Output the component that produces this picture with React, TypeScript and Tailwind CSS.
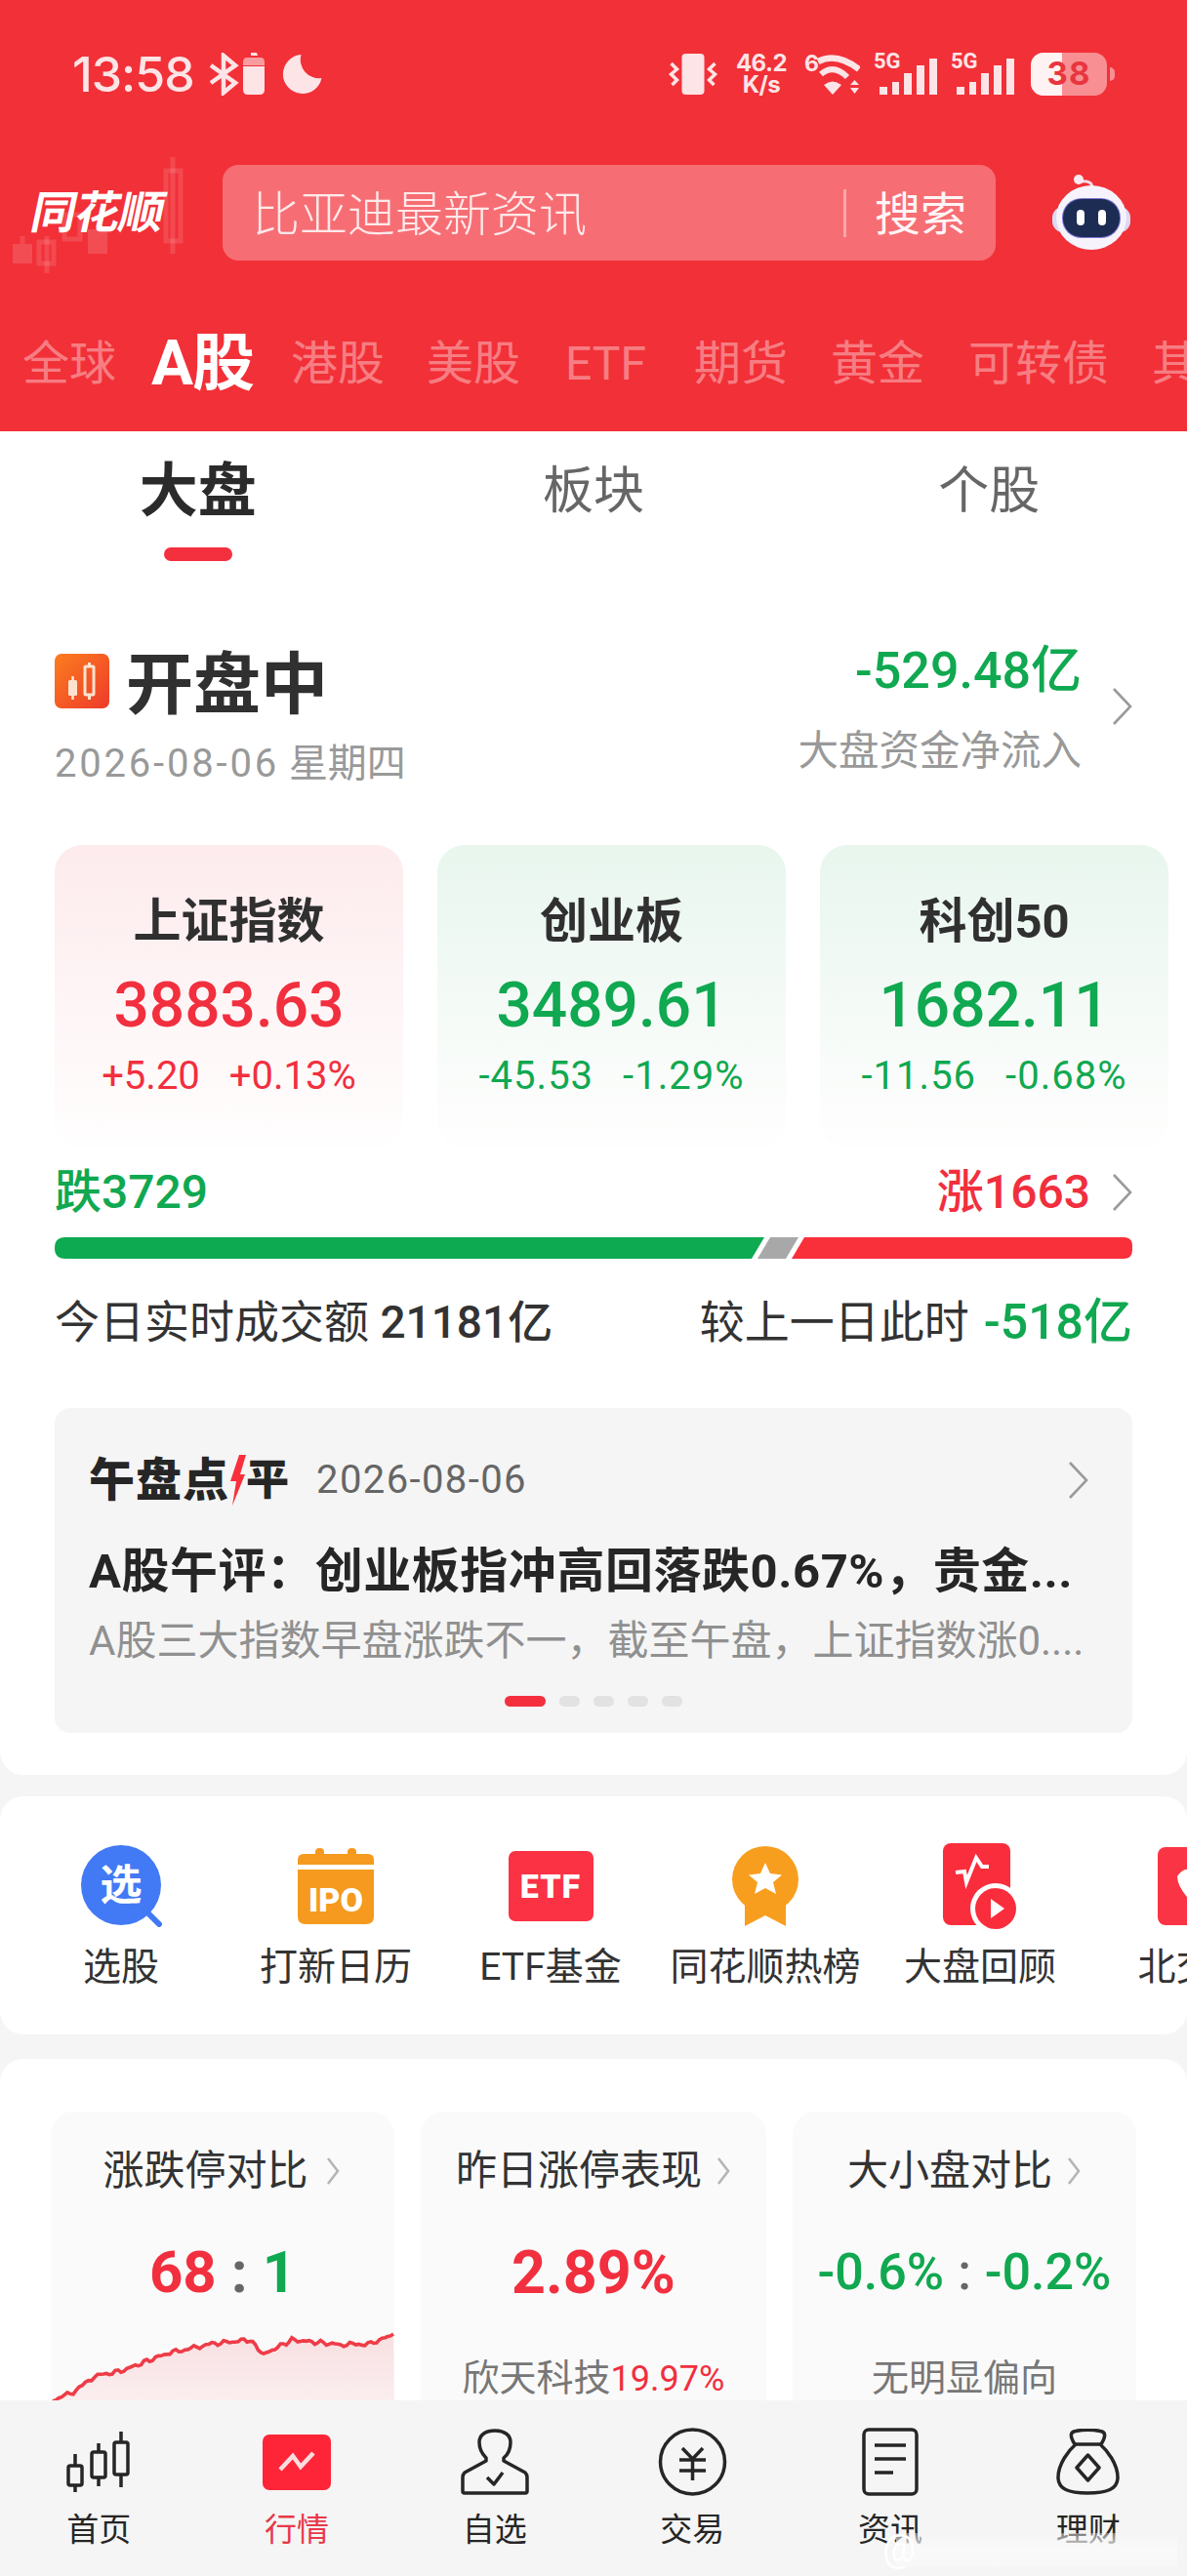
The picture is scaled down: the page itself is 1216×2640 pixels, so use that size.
import React from "react";

const RED = "text-[#f12f3e]";
const GREEN = "text-[#10a850]";

function Chevron({ className = "" }: { className?: string }) {
  return (
    <svg className={`shrink-0 ${className}`} width="22" height="40" viewBox="0 0 22 40" fill="none">
      <polyline points="3,2 20,20 3,38" stroke="#9a9a9a" strokeWidth="2.6" />
    </svg>
  );
}

function SmallChevron() {
  return (
    <svg className="shrink-0" width="16" height="30" viewBox="0 0 16 30" fill="none">
      <polyline points="3,2 13,15 3,28" stroke="#b5b5b5" strokeWidth="2.6" />
    </svg>
  );
}

function Signal() {
  return (
    <div className="relative w-[65px] h-[44px] shrink-0">
      <span className="absolute left-0 top-[-2px] text-[22px] leading-[22px] font-bold text-[#fde4e6]">5G</span>
      <svg className="absolute left-0 top-0" width="65" height="44" viewBox="0 0 65 44" fill="#fde4e6">
        <rect x="6" y="35" width="8" height="8" />
        <rect x="19" y="30" width="7" height="13" />
        <rect x="31" y="21" width="8" height="22" />
        <rect x="44" y="13" width="8" height="30" />
        <rect x="57" y="6" width="8" height="37" />
      </svg>
    </div>
  );
}

function StatusBar() {
  return (
    <div className="flex items-center justify-between h-[54px] pl-[74px] pr-[74px] text-[#fde4e6]">
      <div className="flex items-center">
        <span className="text-[50px] leading-[54px] font-medium w-[130px] font-['Inter',sans-serif] tracking-[-1px]">13:58</span>
        <svg className="ml-[8px]" width="34" height="44" viewBox="0 0 32 44" fill="none" stroke="#fde4e6" strokeWidth="4.5">
          <path d="M3 13 L28 31 L16 41 V3 L28 13 L3 31" />
        </svg>
        <svg className="ml-[3px]" width="22" height="44" viewBox="0 0 22 44" fill="#fde4e6">
          <path d="M8 0 H14 L15 3 H8 Z" />
          <path d="M4 5 H18 Q22 5 22 10 V13 H0 V10 Q0 5 4 5 Z" fillOpacity="0.6" />
          <path d="M0 14 H22 V38 Q22 43 17 43 H5 Q0 43 0 38 Z" />
        </svg>
        <svg className="ml-[17px]" width="43" height="42" viewBox="0 0 42 42" fill="#fde4e6">
          <path d="M20 1 A20 20 0 1 0 41 25 A19 19 0 0 1 20 1 Z" />
        </svg>
      </div>
      <div className="flex items-center">
        <svg width="53" height="44" viewBox="0 0 52 44" fill="none">
          <rect x="14" y="1" width="23" height="42" rx="4" fill="#fde4e6" />
          <path d="M3 11 L9 17 L3 22 L9 28 L4 33" stroke="#fde4e6" strokeWidth="3.5" />
          <path d="M48 11 L42 17 L48 22 L42 28 L47 33" stroke="#fde4e6" strokeWidth="3.5" />
        </svg>
        <div className="ml-[14px] w-[58px] flex flex-col items-center font-bold text-[24px] leading-[22px] font-['Inter',sans-serif] tracking-[-0.5px]">
          <span>46.2</span>
          <span>K/s</span>
        </div>
        <svg className="ml-[15px]" width="57" height="44" viewBox="0 0 57 44" fill="none">
          <text x="0" y="19" fontSize="23" fontWeight="700" fill="#fde4e6" fontFamily="Inter">6</text>
          <path d="M14 9 Q33 -1 56 17" stroke="#fde4e6" strokeWidth="6.5" />
          <path d="M17 22 Q30 11 44 25" stroke="#fde4e6" strokeWidth="6" />
          <path d="M20 33 Q29 26 38 33 L29 43 Z" fill="#fde4e6" />
          <path d="M47 33 L51.5 28 L56 33 Z M47 36 H56 L51.5 42 Z" fill="#fde4e6" />
        </svg>
        <div className="ml-[14px]"><Signal /></div>
        <div className="ml-[14px]"><Signal /></div>
        <div className="relative ml-[17px] w-[78px] h-[44px] rounded-[13px] bg-[#f88f93] overflow-hidden">
          <div className="w-[32px] h-full bg-[#fff2f3]" />
          <span className="absolute inset-0 flex items-center justify-center text-[33px] font-bold text-[#e8363e] font-['Inter',sans-serif] tracking-[1px]">38</span>
        </div>
        <div className="ml-[3px] w-[5px] h-[14px] rounded-r-full bg-[#f88f93]" />
      </div>
    </div>
  );
}

function Robot() {
  return (
    <svg width="84" height="78" viewBox="0 0 80 78">
      <path d="M41 16 Q42 5 29 7" fill="none" stroke="#f3dbe8" strokeWidth="3" />
      <circle cx="27" cy="5" r="5" fill="#fbe9f1" />
      <rect x="0" y="33" width="80" height="26" rx="11" fill="#ded9f2" />
      <ellipse cx="40" cy="44" rx="36" ry="33" fill="#f7f3fc" />
      <rect x="10" y="24" width="60" height="41" rx="20" fill="#7f76d6" />
      <rect x="11" y="25" width="58" height="39" rx="19" fill="#1d2c52" />
      <rect x="25" y="36" width="8" height="16" rx="4" fill="#fff" />
      <rect x="47" y="36" width="8" height="16" rx="4" fill="#fff" />
    </svg>
  );
}

function LogoCandles() {
  return (
    <svg className="absolute left-0 top-[-9px]" width="228" height="130" viewBox="0 0 228 130" fill="none">
      <g stroke="#ffffff" strokeOpacity="0.12" strokeWidth="5">
        <path d="M177 1 V100" />
        <rect x="170" y="15" width="15" height="72" />
        <path d="M48 82 V120" />
        <rect x="40" y="88" width="15" height="22" />
        <rect x="66" y="60" width="16" height="25" />
        <path d="M23 82 V90" />
      </g>
      <g fill="#ffffff" fillOpacity="0.14">
        <rect x="13" y="90" width="20" height="20" />
        <rect x="90" y="75" width="20" height="25" />
      </g>
    </svg>
  );
}

function Header() {
  return (
    <div className="shrink-0 h-[442px] bg-[#f23038] pt-[49px] overflow-hidden">
      <StatusBar />
      <div className="flex items-center h-[98px] mt-[66px]">
        <div className="relative w-[228px] h-full shrink-0 flex items-center pl-[33px]">
          <LogoCandles />
          <span className="relative text-[46px] leading-[46px] font-bold text-white -skew-x-12 tracking-[-1px] whitespace-nowrap">同花顺</span>
        </div>
        <div className="w-[792px] h-full shrink-0 rounded-[16px] bg-white/30 flex items-center pl-[30px]">
          <span className="w-[606px] shrink-0 pt-[5px] text-[49px] leading-[60px] text-white/85 font-light whitespace-nowrap">比亚迪最新资讯</span>
          <span className="w-[3px] h-[49px] shrink-0 bg-white/40" />
          <span className="ml-[29px] pt-[3px] text-[47px] leading-[60px] text-white/95 whitespace-nowrap">搜索</span>
        </div>
        <div className="ml-[56px] shrink-0"><Robot /></div>
      </div>
      <div className="flex items-center h-[70px] mt-[71px] pl-[23px] text-[48px] leading-[70px] text-white/40 whitespace-nowrap">
        <span className="w-[96px] shrink-0">全球</span>
        <span className="ml-[36px] w-[108px] shrink-0 text-[64px] font-bold text-white tracking-[-1px]">A股</span>
        <span className="ml-[35px] w-[96px] shrink-0">港股</span>
        <span className="ml-[43px] w-[96px] shrink-0">美股</span>
        <span className="ml-[46px] w-[88px] shrink-0">ETF</span>
        <span className="ml-[44px] w-[96px] shrink-0">期货</span>
        <span className="ml-[44px] w-[96px] shrink-0">黄金</span>
        <span className="ml-[45px] w-[144px] shrink-0">可转债</span>
        <span className="ml-[44px] w-[96px] shrink-0">其他</span>
      </div>
    </div>
  );
}

function SubTabs() {
  return (
    <div className="grid grid-cols-3 pt-[32px]">
      <div className="flex flex-col items-center">
        <span className="h-[60px] text-[60px] leading-[60px] font-bold text-[#2b2b2b]">大盘</span>
        <span className="mt-[27px] w-[70px] h-[14px] rounded-full bg-[#f4303f]" />
      </div>
      <span className="h-[60px] text-center text-[52px] leading-[60px] text-[#666]">板块</span>
      <span className="h-[60px] text-center text-[52px] leading-[60px] text-[#666]">个股</span>
    </div>
  );
}

function OpenHead() {
  return (
    <div className="flex justify-between pl-[56px] pr-[56px] mt-[80px]">
      <div className="pt-[9px]">
        <div className="flex items-center h-[68px]">
          <svg width="56" height="56" viewBox="0 0 56 56">
            <defs>
              <linearGradient id="opg" x1="0" y1="0" x2="1" y2="1">
                <stop offset="0" stopColor="#fb7e1e" />
                <stop offset="1" stopColor="#ee3a2b" />
              </linearGradient>
            </defs>
            <rect width="56" height="56" rx="7" fill="url(#opg)" />
            <rect x="14" y="27" width="9" height="16" rx="1.5" fill="#fde3cf" />
            <path d="M18.5 23 V47" stroke="#fde3cf" strokeWidth="2.5" />
            <rect x="31" y="13" width="9" height="29" fill="none" stroke="#fde3cf" strokeWidth="3" rx="1" />
            <path d="M35.5 9 V13 M35.5 42 V47" stroke="#fde3cf" strokeWidth="3" />
          </svg>
          <span className="ml-[17px] pt-[9px] text-[69px] leading-[68px] font-bold text-[#303030] whitespace-nowrap">开盘中</span>
        </div>
        <div className="mt-[26px] h-[50px] text-[40px] leading-[50px] text-[#999] whitespace-nowrap">
          <span className="tracking-[2.8px]">2026-08-06</span> 星期四
        </div>
      </div>
      <div className="flex items-center h-[138px]">
        <div className="flex flex-col items-end pt-[4px]">
          <span className={`h-[60px] text-[52px] leading-[60px] font-medium whitespace-nowrap ${GREEN}`}>-529.48亿</span>
          <span className="mt-[27px] h-[50px] text-[41.5px] leading-[50px] text-[#999] whitespace-nowrap">大盘资金净流入</span>
        </div>
        <Chevron className="ml-[30px]" />
      </div>
    </div>
  );
}

function IndexCard({ title, value, a, b, up }: { title: string; value: string; a: string; b: string; up: boolean }) {
  const color = up ? RED : GREEN;
  const bg = up ? "from-[#fdebed]" : "from-[#e8f6ee]";
  return (
    <div className={`w-[357px] h-[310px] shrink-0 rounded-[28px] bg-gradient-to-b ${bg} to-[#fffefe] flex flex-col items-center pt-[49px]`}>
      <span className="h-[60px] text-[49px] leading-[60px] font-bold text-[#303030] whitespace-nowrap">{title}</span>
      <span className={`mt-[16px] h-[80px] text-[64px] leading-[80px] font-medium whitespace-nowrap ${color}`}>{value}</span>
      <div className={`mt-[7px] h-[50px] flex gap-[30px] text-[40px] leading-[50px] whitespace-nowrap ${color} ${up ? "" : "tracking-[1px]"}`}>
        <span>{a}</span>
        <span>{b}</span>
      </div>
    </div>
  );
}

function Breadth() {
  return (
    <div className="px-[56px]">
      <div className="mt-[20px] h-[60px] flex items-center justify-between">
        <span className={`text-[48px] leading-[60px] font-medium whitespace-nowrap ${GREEN}`}>跌3729</span>
        <div className="flex items-center">
          <span className={`text-[48px] leading-[60px] font-medium whitespace-nowrap ${RED}`}>涨1663</span>
          <Chevron className="ml-[21px]" />
        </div>
      </div>
      <svg className="block mt-[16px]" width="1104" height="22" viewBox="0 0 1104 22">
        <path d="M11 0 H727 L714 22 H11 Q0 22 0 11 Q0 0 11 0 Z" fill="#0daa52" />
        <path d="M733 0 H762 L749 22 H720 Z" fill="#a8a8a8" />
        <path d="M768 0 H1095 Q1104 0 1104 9 V13 Q1104 22 1095 22 H755 Z" fill="#f92f3a" />
      </svg>
      <div className="mt-[35px] h-[60px] flex items-center justify-between text-[46px] leading-[60px] text-[#333] whitespace-nowrap">
        <span>今日实时成交额 <span className="font-medium text-[#333]">21181亿</span></span>
        <span className="flex items-center">
          <span>较上一日此时</span>
          <span className={`ml-[15px] text-[50px] font-medium ${GREEN}`}>-518亿</span>
        </span>
      </div>
    </div>
  );
}

function Review() {
  return (
    <div className="mx-[56px] mt-[58px] h-[333px] rounded-[16px] bg-[#f5f5f5] pl-[35px] pr-[45px] pt-[44px]">
      <div className="h-[60px] flex items-center justify-between">
        <div className="flex items-center">
          <span className="text-[47px] leading-[60px] font-black text-[#262626] tracking-[1px] whitespace-nowrap">午盘点</span>
          <svg width="17" height="52" viewBox="0 0 17 52" fill="#f9303b">
            <path d="M10 0 H17 L11 20 H16 L3 52 L7 27 H1 Z" />
          </svg>
          <span className="text-[44px] leading-[60px] font-black text-[#262626] whitespace-nowrap">平</span>
          <span className="ml-[28px] text-[40px] leading-[60px] text-[#666] tracking-[1.4px] whitespace-nowrap">2026-08-06</span>
        </div>
        <Chevron />
      </div>
      <div className="mt-[32px] h-[64px] text-[49px] leading-[64px] font-bold text-[#262626] tracking-[0.55px] whitespace-nowrap">A股午评：创业板指冲高回落跌0.67%，贵金...</div>
      <div className="mt-[11px] h-[56px] text-[42px] leading-[56px] text-[#909090] whitespace-nowrap">A股三大指数早盘涨跌不一，截至午盘，上证指数涨0....</div>
      <div className="mt-[28px] flex justify-center gap-[14px] pl-[10px]">
        <span className="w-[42px] h-[11px] rounded-full bg-[#f4303f]" />
        <span className="w-[21px] h-[11px] rounded-full bg-[#e2e2e2]" />
        <span className="w-[21px] h-[11px] rounded-full bg-[#e2e2e2]" />
        <span className="w-[21px] h-[11px] rounded-full bg-[#e2e2e2]" />
        <span className="w-[21px] h-[11px] rounded-full bg-[#e2e2e2]" />
      </div>
    </div>
  );
}

const icons: Record<string, React.ReactNode> = {
  xuan: (
    <svg width="84" height="84" viewBox="0 0 84 84">
      <circle cx="42" cy="41" r="41" fill="#4279f5" />
      <path d="M66 66 L81 81" stroke="#4279f5" strokeWidth="6" strokeLinecap="round" />
      <text x="42" y="56" fontSize="43" fontWeight="700" fill="#fff" textAnchor="middle" fontFamily="Noto Sans CJK SC">选</text>
    </svg>
  ),
  ipo: (
    <svg width="78" height="78" viewBox="0 0 78 78">
      <rect x="18" y="0" width="9" height="10" rx="4" fill="#f59a1f" />
      <rect x="51" y="0" width="9" height="10" rx="4" fill="#f59a1f" />
      <path d="M6 6 H72 Q78 6 78 12 V17 H0 V12 Q0 6 6 6 Z" fill="#f59a1f" />
      <path d="M0 22 H78 V70 Q78 78 70 78 H8 Q0 78 0 70 Z" fill="#f59a1f" />
      <text x="39" y="65" fontSize="34" fontWeight="900" fill="#fff" textAnchor="middle" fontFamily="Roboto">IPO</text>
    </svg>
  ),
  etf: (
    <div className="w-[87px] h-[72px] rounded-[7px] bg-[#fb3144] flex items-center justify-center text-[34px] font-black text-white tracking-[1px]">ETF</div>
  ),
  medal: (
    <svg width="70" height="82" viewBox="0 0 70 82">
      <path d="M14 50 L14 82 L35 71 L56 82 L56 50 Z" fill="#f89e1e" />
      <circle cx="35" cy="34" r="34" fill="#f89e1e" />
      <path d="M35 17 L40 28 L52 29.5 L43 37 L46 49 L35 43 L24 49 L27 37 L18 29.5 L30 28 Z" fill="#fff" />
    </svg>
  ),
  replay: (
    <svg width="76" height="89" viewBox="0 0 76 89">
      <rect x="0" y="0" width="69" height="84" rx="8" fill="#fa2d3c" />
      <path d="M13 30 L22 29 L24 40 L34 15 L40 24 L47 24" fill="none" stroke="#fff" strokeWidth="4" />
      <circle cx="54" cy="67" r="26" fill="#fff" />
      <circle cx="54" cy="67" r="21" fill="#fa2d3c" />
      <path d="M49 57 L63 67 L49 77 Z" fill="#fff" />
    </svg>
  ),
  bei: (
    <svg width="76" height="80" viewBox="0 0 76 80">
      <rect x="0" y="0" width="76" height="80" rx="8" fill="#fa3444" />
      <path d="M20 30 Q28 18 38 26 Q48 18 56 30 Q56 42 38 60 Q20 42 20 30 Z" fill="#fff" />
    </svg>
  ),
};

function Shortcuts() {
  const items = [
    ["xuan", "选股"],
    ["ipo", "打新日历"],
    ["etf", "ETF基金"],
    ["medal", "同花顺热榜"],
    ["replay", "大盘回顾"],
    ["bei", "北交所"],
  ];
  return (
    <div className="mt-[22px] h-[244px] rounded-[24px] bg-white flex overflow-hidden pl-[14px] pt-[46px] shrink-0">
      {items.map(([k, label]) => (
        <div key={k} className="w-[220px] shrink-0 flex flex-col items-center">
          <div className="h-[92px] flex items-center justify-center">{icons[k]}</div>
          <span className="mt-[12px] h-[50px] text-[39px] leading-[50px] text-[#333] whitespace-nowrap">{label}</span>
        </div>
      ))}
    </div>
  );
}

function Spark() {
  const anchors = [[2, 75], [26, 65], [45, 50], [72, 45], [119, 27], [165, 17], [204, 13], [218, 28], [247, 13], [297, 18], [328, 17], [351, 7]];
  const pts: string[] = [];
  for (let i = 0; i < anchors.length - 1; i++) {
    const [x0, y0] = anchors[i];
    const [x1, y1] = anchors[i + 1];
    const n = Math.max(2, Math.round((x1 - x0) / 3));
    for (let j = 0; j < n; j++) {
      const t = j / n;
      const x = x0 + (x1 - x0) * t;
      const jitter = Math.sin(x * 1.7) * 1.4 + Math.sin(x * 0.63) * 1.1;
      pts.push(`${x.toFixed(1)},${(y0 + (y1 - y0) * t + jitter).toFixed(1)}`);
    }
  }
  pts.push("351,7");
  const line = pts.join(" ");
  return (
    <svg className="block mt-[16px]" width="352" height="80" viewBox="0 0 352 80">
      <defs>
        <linearGradient id="spk" x1="0" y1="0" x2="0" y2="1">
          <stop offset="0" stopColor="#f8dfe1" />
          <stop offset="1" stopColor="#fbeff0" />
        </linearGradient>
      </defs>
      <polygon points={`0,80 ${line} 352,80`} fill="url(#spk)" />
      <polyline points={line} fill="none" stroke="#ee3c47" strokeWidth="3.6" />
    </svg>
  );
}

function Stats() {
  return (
    <div className="mt-[25px] flex-1 rounded-t-[24px] bg-white pl-[52px] pt-[54px] flex gap-[27px] overflow-hidden">
      <div className="w-[352px] h-[400px] shrink-0 rounded-t-[24px] bg-[#fafafa] pt-[36px]">
        <div className="h-[50px] flex items-center justify-center gap-[17px] pr-[2px]">
          <span className="text-[42px] leading-[50px] text-[#333] whitespace-nowrap">涨跌停对比</span>
          <SmallChevron />
        </div>
        <div className="mt-[39px] h-[80px] flex items-center justify-center text-[60px] leading-[80px] font-bold whitespace-nowrap">
          <span className={RED}>68</span>
          <span className="mx-[15px] text-[#666]">:</span>
          <span className={GREEN}>1</span>
        </div>
        <Spark />
      </div>
      <div className="w-[354px] h-[400px] shrink-0 rounded-t-[24px] bg-[#fafafa] pt-[36px]">
        <div className="h-[50px] flex items-center justify-center gap-[14px]">
          <span className="text-[42px] leading-[50px] text-[#333] whitespace-nowrap">昨日涨停表现</span>
          <SmallChevron />
        </div>
        <div className={`mt-[39px] h-[80px] text-center text-[61px] leading-[80px] font-bold whitespace-nowrap ${RED}`}>2.89%</div>
        <div className="mt-[43px] h-[50px] text-center text-[38px] leading-[50px] text-[#777] whitespace-nowrap">
          欣天科技<span className={`text-[36px] ${RED}`}>19.97%</span>
        </div>
      </div>
      <div className="w-[352px] h-[400px] shrink-0 rounded-t-[24px] bg-[#fafafa] pt-[36px]">
        <div className="h-[50px] flex items-center justify-center gap-[14px]">
          <span className="text-[42px] leading-[50px] text-[#333] whitespace-nowrap">大小盘对比</span>
          <SmallChevron />
        </div>
        <div className={`mt-[39px] h-[80px] flex items-center justify-center text-[52px] leading-[80px] font-medium whitespace-nowrap ${GREEN}`}>
          <span>-0.6%</span>
          <span className="mx-[14px] text-[#666]">:</span>
          <span>-0.2%</span>
        </div>
        <div className="mt-[43px] h-[50px] text-center text-[38px] leading-[50px] text-[#777] whitespace-nowrap">无明显偏向</div>
      </div>
    </div>
  );
}

const navIcons: React.ReactNode[] = [
  <svg key="0" width="68" height="66" viewBox="0 0 68 66" fill="none" stroke="#262626" strokeWidth="3.5">
    <rect x="3" y="37" width="14" height="20" rx="2" />
    <path d="M10 25 V37 M10 57 V64" />
    <rect x="27" y="23" width="14" height="26" rx="2" />
    <path d="M34 14 V23 M34 49 V58" />
    <rect x="50" y="13" width="14" height="33" rx="2" />
    <path d="M57 2 V13 M57 46 V59" />
  </svg>,
  <svg key="1" width="70" height="57" viewBox="0 0 70 57">
    <rect width="70" height="57" rx="7" fill="#fd2537" />
    <path d="M18 36 L31 22 L39 33 L52 19" fill="none" stroke="#fbdcdf" strokeWidth="4.5" />
  </svg>,
  <svg key="2" width="70" height="68" viewBox="0 0 70 68" fill="none" stroke="#262626" strokeWidth="3.5" strokeLinejoin="round">
    <path d="M26 30 C20 24 19 18 19 14 C19 6 26 2 35 2 C44 2 51 6 51 14 C51 20 49 26 44 30 L44 33 L66 45 Q68 47 68 50 L68 64 Q68 66 66 66 H4 Q2 66 2 64 V50 Q2 47 4 45 L26 33 Z" />
    <path d="M27 50 L34 57 L43 45" />
  </svg>,
  <svg key="3" width="71" height="70" viewBox="0 0 71 70" fill="none" stroke="#262626" strokeWidth="3.5">
    <circle cx="35.5" cy="35" r="33" />
    <path d="M25 21 L35.5 32 L46 21 M22 33 H49 M22 44 H49 M35.5 32 V54" />
  </svg>,
  <svg key="4" width="58" height="70" viewBox="0 0 58 70" fill="none" stroke="#262626" strokeWidth="3.5">
    <rect x="2" y="2" width="54" height="66" rx="5" />
    <path d="M13 18 H45 M13 32 H45 M13 46 H32" />
  </svg>,
  <svg key="5" width="65" height="68" viewBox="0 0 65 68" fill="none" stroke="#262626" strokeWidth="3.5" strokeLinejoin="round">
    <path d="M19 16 C14 8 14 3 20 2.5 C27 1 38 1 45 2.5 C51 3 51 8 46 16" />
    <path d="M20 16 H45 C52 22 63 36 63 50 C63 62 52 66 32 66 C13 66 2 62 2 50 C2 36 13 22 20 16 Z" />
    <path d="M32.5 27 L44 40 L32.5 53 L21 40 Z" />
  </svg>,
];

function Nav() {
  const labels = ["首页", "行情", "自选", "交易", "资讯", "理财"];
  return (
    <div className="relative shrink-0 h-[180px] bg-[#f5f5f5] grid grid-cols-6 pt-[25px]">
      {labels.map((l, i) => (
        <div key={l} className="flex flex-col items-center">
          <div className="h-[76px] flex items-center justify-center">{navIcons[i]}</div>
          <span className={`mt-[10px] h-[44px] text-[33px] leading-[44px] whitespace-nowrap ${i === 1 ? "text-[#e8394a]" : "text-[#262626]"}`}>{l}</span>
        </div>
      ))}
      <div className="absolute left-[918px] top-[136px] w-[288px] h-[34px] bg-gradient-to-b from-[#f5f5f5]/40 via-[#fafafa]/90 to-[#f8f8f8]/95" />
      <span className="absolute left-[904px] top-[132px] text-[38px] leading-[40px] text-white">@</span>
    </div>
  );
}

export default function App() {
  return (
    <div className="w-[1216px] h-[2640px] flex flex-col overflow-hidden bg-[#f5f5f5] font-['Roboto','Noto_Sans_CJK_SC',sans-serif]">
      <Header />
      <div className="flex-1 min-h-0 flex flex-col overflow-hidden">
        <div className="shrink-0 h-[1377px] rounded-b-[24px] bg-white">
          <SubTabs />
          <OpenHead />
          <div className="flex gap-[35px] pl-[56px] mt-[58px] -mb-[4px]">
            <IndexCard title="上证指数" value="3883.63" a="+5.20" b="+0.13%" up />
            <IndexCard title="创业板" value="3489.61" a="-45.53" b="-1.29%" up={false} />
            <IndexCard title="科创50" value="1682.11" a="-11.56" b="-0.68%" up={false} />
          </div>
          <Breadth />
          <Review />
        </div>
        <Shortcuts />
        <Stats />
      </div>
      <Nav />
    </div>
  );
}
